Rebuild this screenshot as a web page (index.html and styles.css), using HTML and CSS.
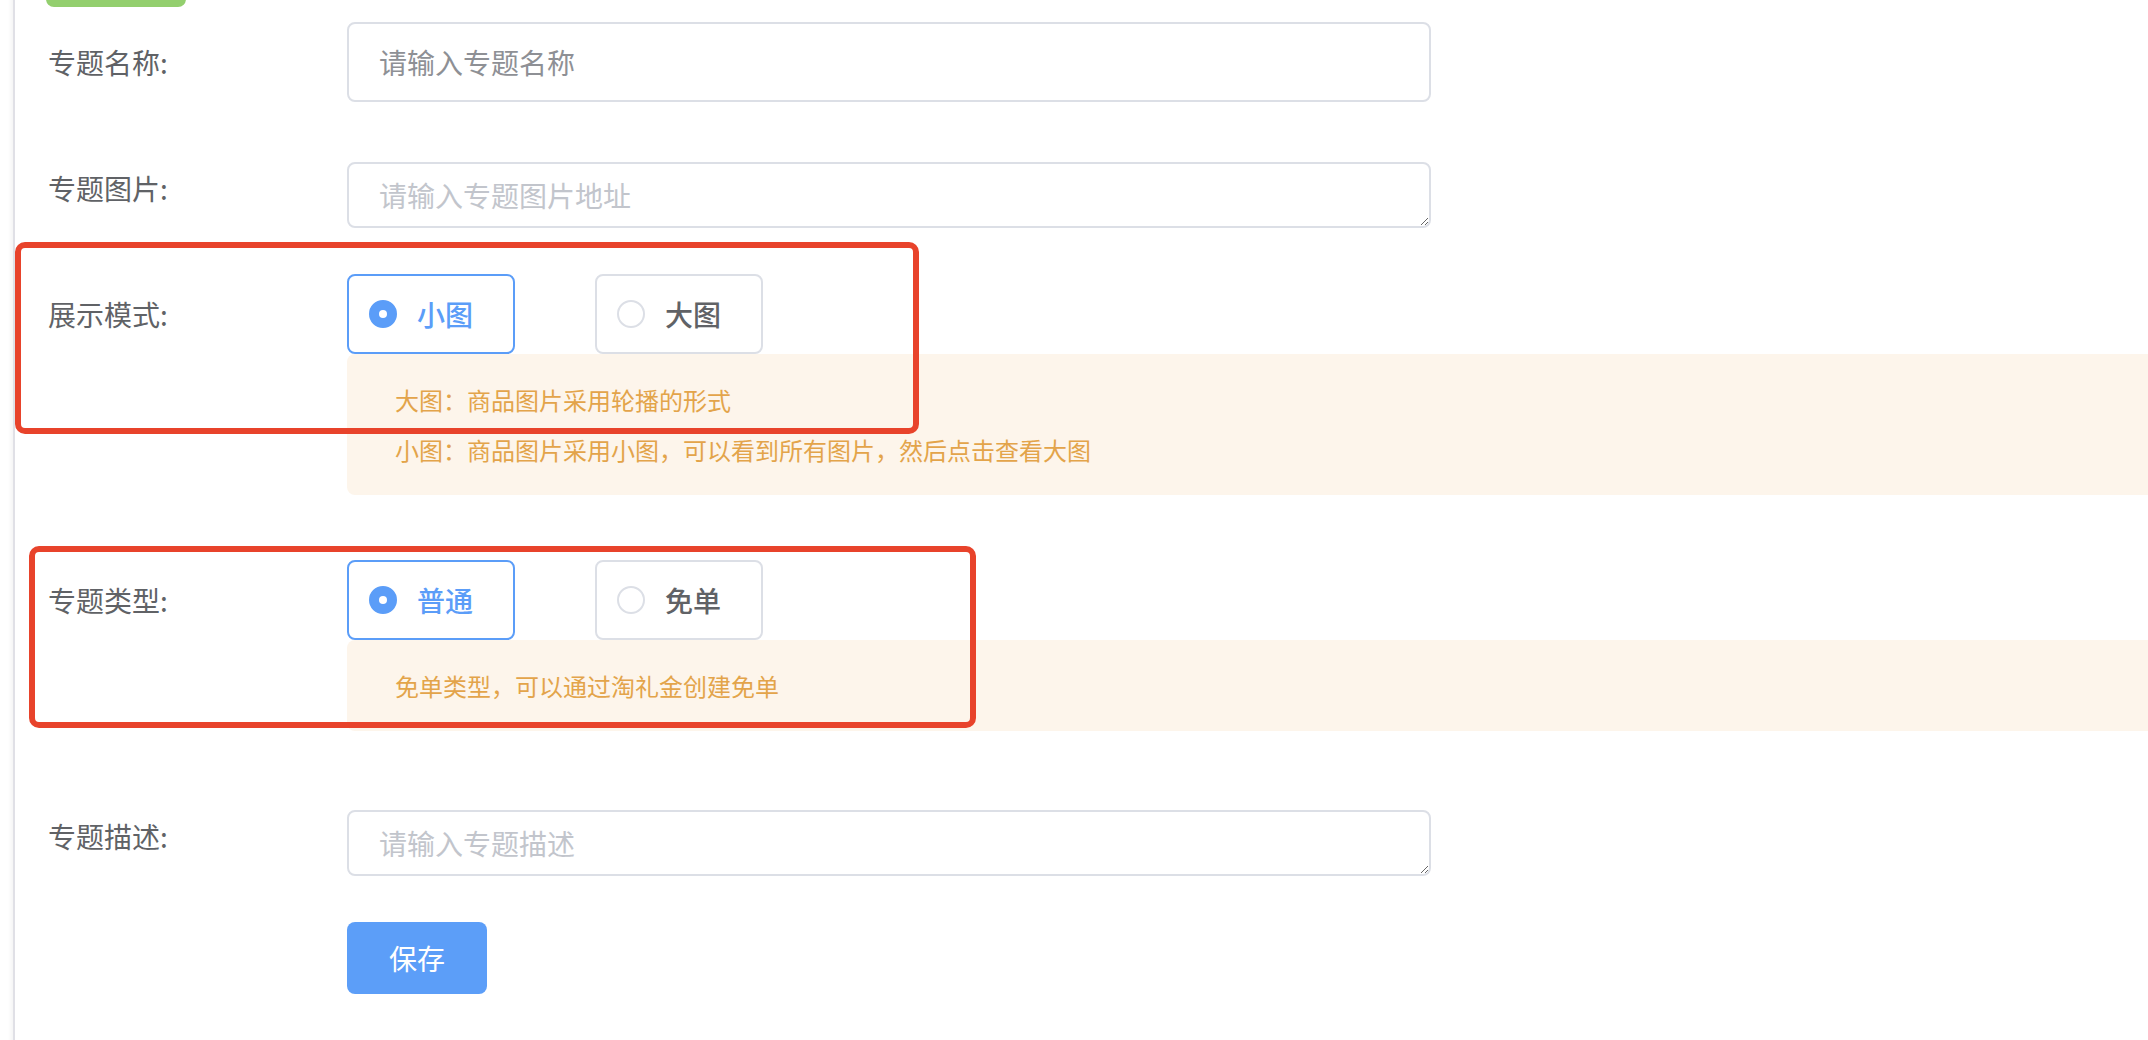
FILE: index.html
```html
<!DOCTYPE html>
<html lang="zh-CN">
<head>
<meta charset="utf-8">
<title>专题编辑</title>
<link rel="stylesheet" href="styles.css">
</head>
<body>
<div class="page">
  <main class="main">
    <div class="top-btn"></div>
    <form class="form">
      <div class="item">
        <label class="label">专题名称:</label>
        <div class="content">
          <input class="input" type="text" placeholder="请输入专题名称">
        </div>
      </div>
      <div class="item item-textarea">
        <label class="label">专题图片:</label>
        <div class="content">
          <textarea class="textarea" rows="1" placeholder="请输入专题图片地址"></textarea>
        </div>
      </div>
      <div class="item item-tip">
        <label class="label">展示模式:</label>
        <div class="content">
          <div class="radio-group">
            <span class="radio checked"><span class="dot"></span><span class="radio-text">小图</span></span>
            <span class="radio"><span class="dot"></span><span class="radio-text">大图</span></span>
          </div>
          <div class="tip">
            <p>大图：商品图片采用轮播的形式</p>
            <p>小图：商品图片采用小图，可以看到所有图片，然后点击查看大图</p>
          </div>
        </div>
      </div>
      <div class="item item-tip">
        <label class="label">专题类型:</label>
        <div class="content">
          <div class="radio-group">
            <span class="radio checked"><span class="dot"></span><span class="radio-text">普通</span></span>
            <span class="radio"><span class="dot"></span><span class="radio-text">免单</span></span>
          </div>
          <div class="tip">
            <p>免单类型，可以通过淘礼金创建免单</p>
          </div>
        </div>
      </div>
      <div class="item item-textarea">
        <label class="label">专题描述:</label>
        <div class="content">
          <textarea class="textarea light" rows="1" placeholder="请输入专题描述"></textarea>
        </div>
      </div>
      <div class="item item-actions">
        <button type="button" class="btn-save">保存</button>
      </div>
    </form>
  </main>
  <div class="mark mark-one"></div>
  <div class="mark mark-two"></div>
</div>
</body>
</html>
```
FILE: styles.css
```css
html, body {
  margin: 0;
  padding: 0;
  background: #ffffff;
  overflow: hidden;
  height: 100%;
}

.page {
  position: relative;
  width: 2148px;
  height: 1040px;
  overflow: hidden;
  font-family: "Noto Sans CJK SC", "Noto Sans", sans-serif;
}

.main {
  margin-left: 13px;
  border-left: 2px solid #e0e0e6;
  box-shadow: -3px 0 4px -1px rgba(0, 0, 0, 0.05);
  padding-left: 33px;
  height: 1200px;
}

.top-btn {
  width: 140px;
  height: 72px;
  margin-top: -65px;
  margin-left: -2px;
  background: #93cf6e;
  border-radius: 8px;
}

.form {
  margin-top: 15px;
}

.item {
  display: flex;
  align-items: flex-start;
  margin-bottom: 46px;
}

.item-textarea {
  align-items: flex-end;
}

.item-tip {
  margin-bottom: 65px;
}

.label {
  width: 299px;
  flex: none;
  font-size: 28px;
  line-height: 80px;
  height: 80px;
  color: #606266;
}

.content {
  flex: 1;
  min-width: 0;
}

.input {
  display: block;
  box-sizing: border-box;
  width: 1084px;
  height: 80px;
  border: 2px solid #dcdfe6;
  border-radius: 8px;
  padding: 0 30px;
  font-family: inherit;
  font-size: 28px;
  color: #606266;
  outline: none;
  background: #fff;
}

.input::placeholder {
  color: #8e9095;
}

.textarea {
  display: block;
  box-sizing: border-box;
  width: 1084px;
  height: 66px;
  border: 2px solid #dcdfe6;
  border-radius: 8px;
  padding: 10px 30px;
  font-family: inherit;
  font-size: 28px;
  line-height: 42px;
  color: #606266;
  outline: none;
  resize: vertical;
  background: #fff;
}

.textarea::placeholder {
  color: #c2c5cc;
}

.radio-group {
  display: flex;
  gap: 80px;
  height: 80px;
}

.radio {
  box-sizing: border-box;
  display: inline-flex;
  align-items: center;
  height: 80px;
  padding: 0 40px 0 20px;
  border: 2px solid #dcdfe6;
  border-radius: 8px;
  font-size: 28px;
  font-weight: 500;
  color: #606266;
  background: #fff;
}

.dot {
  box-sizing: border-box;
  width: 28px;
  height: 28px;
  border-radius: 50%;
  border: 2px solid #dcdfe6;
  background: #fff;
  margin-right: 20px;
  display: inline-flex;
  align-items: center;
  justify-content: center;
}

.radio.checked {
  border-color: #5b9df8;
  color: #5b9df8;
}

.radio.checked .dot {
  border-color: #5b9df8;
  background: #5b9df8;
}

.radio.checked .dot::after {
  content: "";
  width: 8px;
  height: 8px;
  border-radius: 50%;
  background: #fff;
}

.radio-text {
  line-height: 1;
}

.tip {
  width: 1900px;
  box-sizing: border-box;
  padding: 21px 48px 20px;
  background: #fdf5eb;
  border-radius: 8px;
  color: #e3a44a;
  font-size: 24px;
  line-height: 50px;
}

.tip p {
  margin: 0;
}

.item-actions {
  padding-left: 299px;
}

.btn-save {
  width: 140px;
  height: 72px;
  border: none;
  border-radius: 8px;
  background: #5c9ef8;
  color: #fff;
  font-family: inherit;
  font-size: 28px;
  padding: 0;
  cursor: pointer;
}

.mark {
  position: absolute;
  box-sizing: border-box;
  border: 6px solid #e8432b;
  border-radius: 10px;
}

.mark-one {
  left: 15px;
  top: 242px;
  width: 904px;
  height: 192px;
}

.mark-two {
  left: 29px;
  top: 546px;
  width: 947px;
  height: 182px;
}
```
